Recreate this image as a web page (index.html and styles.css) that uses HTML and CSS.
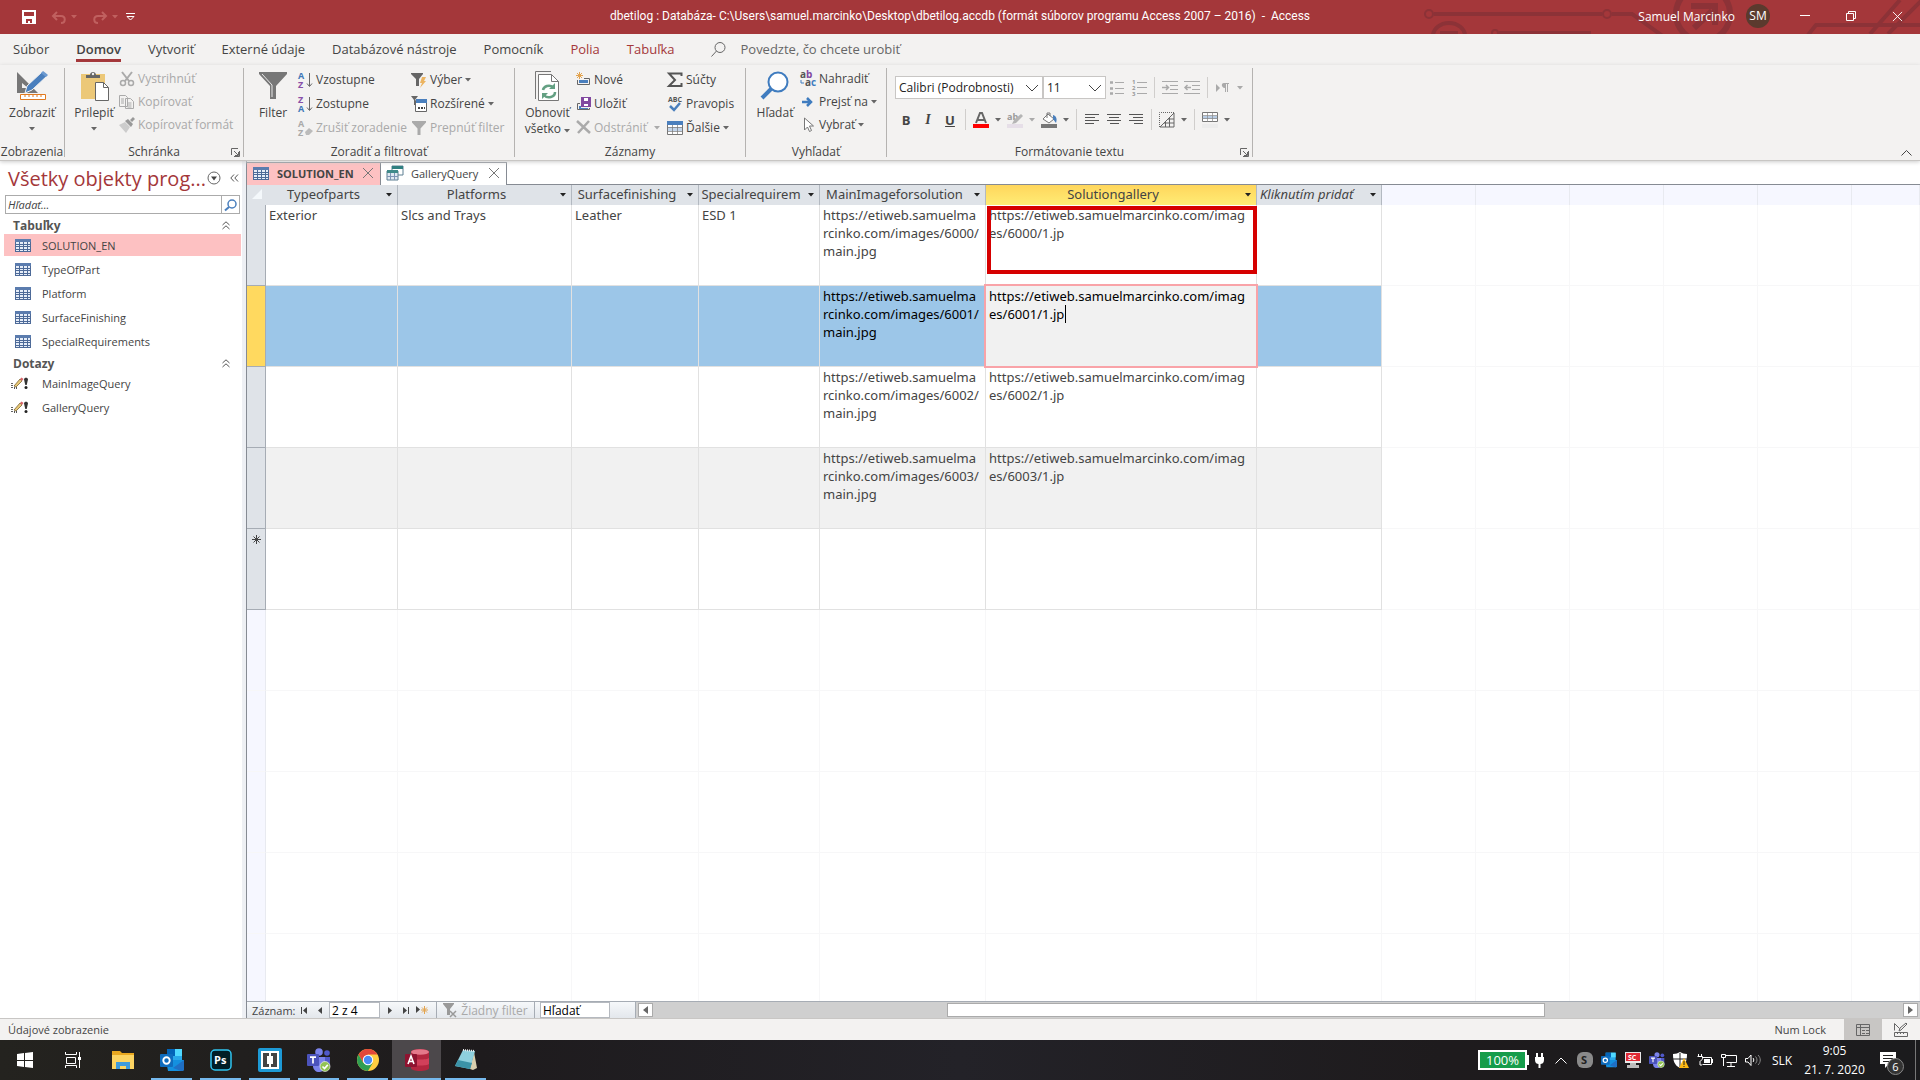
FILE: index.html
```html
<!DOCTYPE html>
<html lang="sk">
<head>
    <meta charset="UTF-8">
    <meta name="viewport" content="width=device-width, initial-scale=1.0">
    <title>dbetilog - Access</title>
    <link rel="stylesheet" href="styles.css">
</head>
<body>
    <!-- shared icons -->
    <svg class="sprites" aria-hidden="true">
        <symbol id="caret" viewBox="0 0 6 4"><path d="M0 0h6L3 3.5z"/></symbol>
        <symbol id="close" viewBox="0 0 12 12"><path d="M1 1l10 10M11 1L1 11" fill="none" stroke="currentColor"/></symbol>
        <symbol id="table" viewBox="0 0 16 13">
            <rect width="16" height="13" fill="#4d6a98"/>
            <rect width="16" height="3" fill="#5b7cae"/>
            <path d="M1 3h3v2H1zM5 3h3v2H5zM9 3h3v2H9zM13 3h2v2h-2zM1 6h3v1H1zM5 6h3v1H5zM9 6h3v1H9zM13 6h2v1h-2zM1 8h3v2H1zM5 8h3v2H5zM9 8h3v2H9zM13 8h2v2h-2zM1 11h3v1H1zM5 11h3v1H5zM9 11h3v1H9zM13 11h2v1h-2z" fill="#e6edf8"/>
        </symbol>
        <symbol id="query" viewBox="0 0 18 14">
            <path d="M1 7v1M1 9v1M1 11v1M3 12h1M5 12h1" stroke="#222" stroke-width="1.4"/>
            <path d="M3 10l6-7 2 2-6 6z" fill="#e8c878" stroke="#6b5320" stroke-width=".7"/>
            <path d="M9 3l1.500-1.500 2 1.500-1.500 2z" fill="#d9646a"/>
            <path d="M13 3.500C13 1 17 1 17 3.500L15.700 9h-1.400z" fill="#333"/>
            <circle cx="15" cy="11.500" r="1.500" fill="#222"/>
        </symbol>
        <symbol id="launch" viewBox="0 0 9 9"><path d="M.5 7V.5H7M3 3l4 4M8.500 3v5.500H3M7.500 4v3.500H4" fill="none" stroke="#666"/></symbol>
        <symbol id="funnel" viewBox="0 0 28 28"><path d="M0 0h28v3L17 15v13h-6V15L0 3z"/></symbol>
        <symbol id="outlook" viewBox="0 0 24 22">
            <rect x="7" width="15" height="13" fill="#28a8ea"/><rect x="7" width="8" height="7" fill="#0364b8"/><rect x="15" width="7" height="7" fill="#50d9ff"/>
            <path d="M6 11h18v9a2 2 0 0 1-2 2H8z" fill="#1490df"/><path d="M24 11L13 19l8 3h1a2 2 0 0 0 2-2z" fill="#1f6fc4"/>
            <rect y="5" width="13" height="13" rx="1" fill="#0f6cbd"/>
            <circle cx="6.500" cy="11.500" r="3.200" fill="none" stroke="#fff" stroke-width="1.900"/>
        </symbol>
        <symbol id="teams" viewBox="0 0 24 24">
            <circle cx="12" cy="4" r="3.800" fill="#7b83eb"/><circle cx="20" cy="5" r="2.800" fill="#5059c9"/>
            <path d="M15 9h8v7a4 4 0 0 1-8 2z" fill="#5059c9"/><path d="M6 9h12v8a6 6 0 0 1-12 2z" fill="#7b83eb"/>
            <rect y="6" width="12" height="12" rx="1" fill="#4b53bc"/><path d="M3 9.200h6M6 9v6.500" stroke="#fff" stroke-width="1.700"/>
            <circle cx="18" cy="18.500" r="5" fill="#92c353" stroke="#fff" stroke-width=".6"/><path d="M15.500 18.500l2 2 3.300-3.600" fill="none" stroke="#fff" stroke-width="1.600"/>
        </symbol>
    </svg>

    <div class="app">
        <header class="titlebar">
            <svg class="circuit" width="520" height="34" fill="none" stroke="#8c3237" stroke-width="4">
                <circle cx="29" cy="14" r="4" stroke-width="2"/><path d="M34 14h168M212 14h20l32 23"/><circle cx="207" cy="14" r="4" stroke-width="2"/>
                <path d="M33 36a16 13 0 0 1 32 0M40 33h18M99 33h92"/><circle cx="95" cy="33" r="3" stroke-width="2"/>
                <circle cx="303" cy="14" r="27" stroke-width="6"/><path d="M291 6h24M315 3v22M294 28l18-17" stroke-width="6"/>
                <path d="M408 35l8-10h104M470 34l30-34M488 34l34-34"/>
            </svg>
            <div class="quick">
                <button aria-label="Uložiť"><svg width="14" height="14"><path d="M0 0h14v14H0z" fill="#fff"/><path d="M2 2h10v4H2zM4 9h6v4H8v-2H6v2H4z" fill="#a4373a"/></svg></button>
                <button class="dim" aria-label="Späť"><svg width="14" height="13" fill="none" stroke="currentColor" stroke-width="2"><path d="M5 1L1 5l4 4M1.500 5H9c5 0 5 7 0 7"/></svg><svg class="caret"><use href="#caret"/></svg></button>
                <button class="dim" aria-label="Znova"><svg width="14" height="13" fill="none" stroke="currentColor" stroke-width="2"><path d="M9 1l4 4-4 4M12.500 5H5c-5 0-5 7 0 7"/></svg><svg class="caret"><use href="#caret"/></svg></button>
                <button class="more" aria-label="Prispôsobiť"><svg width="9" height="8" fill="none" stroke="#fff"><path d="M0 .5h9M1 3.500l3.500 3.500L8 3.500z"/></svg></button>
            </div>
            <h1 class="title">dbetilog : Databáza- C:\Users\samuel.marcinko\Desktop\dbetilog.accdb (formát súborov programu Access 2007 – 2016) &nbsp;- &nbsp;Access</h1>
            <div class="user">
                <span>Samuel Marcinko</span>
                <span class="avatar">SM</span>
                <button aria-label="Minimalizovať"><svg width="10" height="10" stroke="#fff"><path d="M0 4.500h10"/></svg></button>
                <button aria-label="Obnoviť okno"><svg width="10" height="10" fill="none" stroke="#fff"><path d="M.5 2.500h7v7h-7zM2.500 2V.5h7v7H8"/></svg></button>
                <button aria-label="Zavrieť"><svg width="11" height="11" color="#fff"><use href="#close"/></svg></button>
            </div>
        </header>

        <nav class="tabs">
            <a href="#">Súbor</a>
            <a href="#" class="active">Domov</a>
            <a href="#">Vytvoriť</a>
            <a href="#">Externé údaje</a>
            <a href="#">Databázové nástroje</a>
            <a href="#">Pomocník</a>
            <a href="#" class="context">Polia</a>
            <a href="#" class="context">Tabuľka</a>
            <label class="tell">
                <svg width="15" height="15" fill="none" stroke="#666"><circle cx="9" cy="5.500" r="5"/><path d="M5.500 9L.5 14.500"/></svg>
                <input type="text" placeholder="Povedzte, čo chcete urobiť">
            </label>
        </nav>

        <section class="ribbon">
            <div class="group g-view">
                <div class="tools">
                    <button class="big">
                        <svg width="31" height="30"><path d="M0 1l21 21H0zM5 12v5h6z" fill="#777" fill-rule="evenodd"/><path d="M8 22l2-7L26 0l5 4-16 15z" fill="#4a7fbd" stroke="#f3f2f1"/><path d="M26 0l5 4-2 2-5-4z" fill="#6c9ad0"/><path d="M3.500 23.500h25v5h-25zM8 24v2M12 24v2M16 24v2M20 24v2M24 24v2" fill="#fff" stroke="#e07a20"/></svg>
                        <span>Zobraziť</span><svg class="caret"><use href="#caret"/></svg>
                    </button>
                </div>
                <h2>Zobrazenia</h2>
            </div>

            <div class="group g-clip">
                <div class="tools">
                    <button class="big">
                        <svg width="29" height="30"><path d="M1 3h24v25H1z" fill="#ecc878"/><path d="M6 7V4h4c0-4 6-4 6 0h4v3z" fill="#666"/><circle cx="13" cy="3" r="1.200" fill="#f3f2f1"/><path d="M15.500 11.500h8l5 5v13h-13z" fill="#fff" stroke="#666"/><path d="M23.500 11.500v5h5" fill="none" stroke="#666"/></svg>
                        <span>Prilepiť</span><svg class="caret"><use href="#caret"/></svg>
                    </button>
                    <div class="stack tight">
                        <button disabled><svg width="16" height="16" fill="none" stroke="#aaa" stroke-width="2"><path d="M3 1l7 9M13 1L6 10"/><circle cx="4" cy="12" r="2.500" stroke-width="1.500"/><circle cx="12" cy="12" r="2.500" stroke-width="1.500"/></svg>Vystrihnúť</button>
                        <button disabled><svg width="16" height="16" fill="#f3f2f1" stroke="#aaa"><path d="M.5 1.500h6l2 2v9h-8zM6.500 4.500h5l3 3v7h-8z"/><path d="M2 5h3M2 7h3M2 9h3M8.500 9h4M8.500 11h4M8.500 13h4"/></svg>Kopírovať</button>
                        <button disabled><svg width="16" height="16"><path d="M0 8l6-3 5 5-4 6z" fill="#ccc"/><path d="M6 4l3-2 5 5-2 3zM11 3l3-3 2 2-3 3z" fill="#999"/></svg>Kopírovať formát</button>
                    </div>
                </div>
                <h2>Schránka</h2>
                <button class="launch" aria-label="Nastavenie schránky"><svg width="9" height="9"><use href="#launch"/></svg></button>
            </div>

            <div class="group g-sort">
                <div class="tools">
                    <button class="big">
                        <svg width="28" height="30"><path d="M0 1h28v2L17 15v13h-6V15L0 3z" fill="#777"/><path d="M3 3l10 11v12" fill="none" stroke="#e8e8e8"/></svg>
                        <span>Filter</span>
                    </button>
                    <div class="stack sort">
                        <button><svg width="15" height="18"><text x="0" y="8" fill="#3f78b8">A</text><text x="0" y="17" fill="#8750a8">Z</text><path d="M11.500 2v13M9 12.500l2.500 3 2.500-3" fill="none" stroke="#666"/></svg>Vzostupne</button>
                        <button><svg width="15" height="18"><text x="0" y="8" fill="#8750a8">Z</text><text x="0" y="17" fill="#3f78b8">A</text><path d="M11.500 2v13M9 12.500l2.500 3 2.500-3" fill="none" stroke="#666"/></svg>Zostupne</button>
                        <button disabled><svg width="15" height="18"><text x="0" y="8" fill="#aaa">A</text><text x="0" y="17" fill="#aaa">Z</text><path d="M7 13l4-4 4 3-4 4H8z" fill="#bbb"/></svg>Zrušiť zoradenie</button>
                    </div>
                    <div class="stack">
                        <button><svg width="16" height="16"><path d="M0 1h12v1L8 7v7H5V7L0 2z" fill="#666"/><path d="M11 5h4l-2 4h2l-6 7 2-5H9z" fill="#ecb460"/></svg>Výber<svg class="caret"><use href="#caret"/></svg></button>
                        <button><svg width="16" height="16"><path d="M0 0h7L4 4v5H3V4z" fill="#666"/><path d="M4.500 4.500h11v11h-11z" fill="#fff" stroke="#666"/><path d="M5 3h11v4H5z" fill="#4a7fbd"/><path d="M7 12h2M10 12h2M13 12h1" stroke="#444" stroke-width="2"/></svg>Rozšírené<svg class="caret"><use href="#caret"/></svg></button>
                        <button disabled><svg width="16" height="14" fill="#aaa"><use href="#funnel"/></svg>Prepnúť filter</button>
                    </div>
                </div>
                <h2>Zoradiť a filtrovať</h2>
            </div>

            <div class="group g-records">
                <div class="tools">
                    <button class="big">
                        <svg width="25" height="30"><path d="M.5 28V.5H16" fill="none" stroke="#777"/><path d="M3.500 3.500h13l7 7v19h-20z" fill="#fff" stroke="#777"/><path d="M16.500 3.500v7h7" fill="none" stroke="#777"/><path d="M8 19a6 5 0 0 1 10-3M20 21a6 5 0 0 1-11 3" fill="none" stroke="#64a083" stroke-width="2.500"/><path d="M20 12v6h-6zM7 28v-6h6z" fill="#64a083"/></svg>
                        <span>Obnoviť<br>všetko <svg class="caret"><use href="#caret"/></svg></span>
                    </button>
                    <div class="stack">
                        <button><svg width="15" height="16"><path d="M3.500 0v7M0 3.500h7M1 1l5 5M6 1L1 6" stroke="#e3a44f"/><path d="M8 6.500h5.500v6h-12V8" fill="none" stroke="#666"/><path d="M3 8h9v3H3z" fill="#4a7fbd"/></svg>Nové</button>
                        <button><svg width="15" height="16"><path d="M5 1h10v10H5z" fill="#8148a0"/><path d="M8 2h4v3H8zM8 8h4v2H8z" fill="#fff"/><path d="M4 7.500H1.500v6h12V12" fill="none" stroke="#666"/><path d="M3 10h2v2h7v1H3z" fill="#4a7fbd"/></svg>Uložiť</button>
                        <button disabled><svg width="15" height="15"><path d="M1 1l13 12M13 1L2 13" stroke="#aaa" stroke-width="2.500"/></svg>Odstrániť<svg class="caret far"><use href="#caret"/></svg></button>
                    </div>
                    <div class="stack">
                        <button><svg width="16" height="16"><path d="M14.500 4V1.500H2L8 8l-6 6h12.500V11" fill="none" stroke="#555" stroke-width="2"/></svg>Súčty</button>
                        <button class="spell"><svg width="16" height="16"><text x="1" y="6" fill="#555">ABC</text><path d="M3 10l4 4 6-7" fill="none" stroke="#4a7fbd" stroke-width="2.500"/></svg>Pravopis</button>
                        <button><svg width="16" height="16"><path d="M.5 1.500h15v13H.5z" fill="#fff" stroke="#777"/><path d="M0 1h16v4H0z" fill="#4a7fbd"/><path d="M1 7h14v4H1z" fill="#c3d5ea"/><path d="M0 7.500h16M0 11.500h16M5.500 5v10M10.500 5v10" stroke="#777" stroke-width=".7"/></svg>Ďalšie<svg class="caret"><use href="#caret"/></svg></button>
                    </div>
                </div>
                <h2>Záznamy</h2>
            </div>

            <div class="group g-find">
                <div class="tools">
                    <button class="big">
                        <svg width="28" height="30" fill="#fff" stroke="#3f7cbf"><path d="M1 27l10-10" stroke-width="4"/><circle cx="17" cy="11" r="9.500" stroke-width="2"/></svg>
                        <span>Hľadať</span>
                    </button>
                    <div class="stack tight replace">
                        <button><svg width="16" height="16"><text x="0" y="7" fill="#555">a</text><text x="6" y="7" fill="#8148a0">b</text><text x="5" y="15" fill="#555">a</text><text x="11" y="15" fill="#3f7cbf">c</text><path d="M1 9v3h3" fill="none" stroke="#3f7cbf"/></svg>Nahradiť</button>
                        <button><svg width="16" height="12"><path d="M2 6h9M7 2l4 4-4 4" fill="none" stroke="#3f7cbf" stroke-width="2.500"/></svg>Prejsť na<svg class="caret"><use href="#caret"/></svg></button>
                        <button><svg width="16" height="16"><path d="M4.500 1v12l3-3 2 4.500 2-1L9.500 9h4z" fill="#fff" stroke="#777"/></svg>Vybrať<svg class="caret"><use href="#caret"/></svg></button>
                    </div>
                </div>
                <h2>Vyhľadať</h2>
            </div>

            <div class="group g-format">
                <div class="format">
                    <div class="row">
                        <select class="font" aria-label="Písmo"><option>Calibri (Podrobnosti)</option></select>
                        <select class="size" aria-label="Veľkosť písma"><option>11</option></select>
                        <button disabled aria-label="Odrážky"><svg width="14" height="15" stroke="#aaa"><path d="M5 2.500h9M5 8.500h9M5 13.500h9"/><path d="M0 2.500h3M0 8.500h3M0 13.500h3" stroke-width="2.500"/></svg></button>
                        <button disabled aria-label="Číslovanie" class="num"><svg width="15" height="17"><text x="0" y="5" fill="#999">1</text><text x="0" y="11" fill="#999">2</text><text x="0" y="17" fill="#999">3</text><path d="M5 3.500h10M5 8.500h10M5 14.500h10" stroke="#aaa"/></svg></button>
                        <i class="sep"></i>
                        <button disabled aria-label="Zväčšiť zarážku"><svg width="16" height="14" fill="none" stroke="#aaa"><path d="M0 .5h16M8 4.500h8M8 8.500h8M0 12.500h16"/><path d="M0 6.500h6M4 4l2.500 2.500L4 9" stroke-width="1.500"/></svg></button>
                        <button disabled aria-label="Zmenšiť zarážku"><svg width="16" height="14" fill="none" stroke="#aaa"><path d="M0 .5h16M8 4.500h8M8 8.500h8M0 12.500h16"/><path d="M1 6.500h6M3.500 4L1 6.500 3.500 9" stroke-width="1.500"/></svg></button>
                        <i class="sep"></i>
                        <button disabled class="split" aria-label="Smer textu"><svg width="16" height="12" fill="#aaa"><path d="M1 2l4 4-4 4zM7 2a2.500 2.500 0 0 1 2.500-1H14v1h-1v8h-1V2h-1v8h-1V6a3 3 0 0 1-3-4z"/></svg><svg class="caret"><use href="#caret"/></svg></button>
                    </div>
                    <div class="row">
                        <button><b>B</b></button>
                        <button><em>I</em></button>
                        <button><u>U</u></button>
                        <i class="sep"></i>
                        <button class="split" aria-label="Farba písma"><svg width="16" height="16"><path d="M3 11l4-10h2l4 10M5 8h6" fill="none" stroke="#666" stroke-width="2"/><path d="M0 12h16v4H0z" fill="#f00"/></svg><svg class="caret"><use href="#caret"/></svg></button>
                        <button class="split hl" disabled aria-label="Zvýraznenie"><svg width="16" height="16"><text x="0" y="8" fill="#999">ab</text><path d="M5 12l2-4 7-6 2 2-7 7z" fill="#b5b5b5"/><path d="M0 12h16v4H0z" fill="#e6dfe8"/></svg><svg class="caret"><use href="#caret"/></svg></button>
                        <button class="split" aria-label="Farba pozadia"><svg width="16" height="16"><path d="M2 7l5-5 6 5-5 4zM6 6V1h3v3" fill="#fff" stroke="#777"/><path d="M12 3c4 1 4 5 3 8l-3-4z" fill="#4a7fbd"/><path d="M0 12h16v4H0z" fill="#777"/></svg><svg class="caret"><use href="#caret"/></svg></button>
                        <i class="sep"></i>
                        <button aria-label="Vľavo"><svg width="15" height="11" stroke="#555"><path d="M0 .5h14M0 3.500h10M0 6.500h14M0 9.500h9"/></svg></button>
                        <button aria-label="Na stred"><svg width="15" height="11" stroke="#555"><path d="M0 .5h14M2 3.500h10M0 6.500h14M3 9.500h9"/></svg></button>
                        <button aria-label="Vpravo"><svg width="15" height="11" stroke="#555"><path d="M0 .5h14M4 3.500h10M0 6.500h14M5 9.500h9"/></svg></button>
                        <i class="sep"></i>
                        <button class="split" aria-label="Mriežka"><svg width="16" height="16" fill="none" stroke="#666"><path d="M.5 15V.5H15" stroke-dasharray="1 1"/><path d="M1 15L15 1v14zM5 11h10M9 7h6M10.500 6v9M6.500 10v5"/></svg><svg class="caret"><use href="#caret"/></svg></button>
                        <i class="sep"></i>
                        <button class="split" aria-label="Farba riadkov"><svg width="16" height="16"><path d="M.5 .5h15v9H.5z" fill="#fff" stroke="#777"/><path d="M1 4h14v3H1z" fill="#b8cce4"/><path d="M5.500 1v9M10.500 1v9M0 3.500h16M0 6.500h16" stroke="#888" stroke-width=".7"/><path d="M0 12h16v4H0z" fill="#ececec"/></svg><svg class="caret"><use href="#caret"/></svg></button>
                    </div>
                </div>
                <h2>Formátovanie textu</h2>
                <button class="launch" aria-label="Nastavenie textu"><svg width="9" height="9"><use href="#launch"/></svg></button>
            </div>
            <button class="collapse" aria-label="Zbaliť pás"><svg width="11" height="6" fill="none" stroke="#444"><path d="M.5 5.500l5-5 5 5"/></svg></button>
        </section>

        <main class="workspace">
            <aside class="pane">
                <div class="pane-title">
                    <h2>Všetky objekty prog...</h2>
                    <button aria-label="Ponuka"><svg width="14" height="14"><circle cx="7" cy="7" r="6" fill="#fff" stroke="#666"/><path d="M4 5.500h6l-3 4z" fill="#444"/></svg></button>
                    <button aria-label="Skryť"><svg width="9" height="8" fill="none" stroke="#555"><path d="M4 .5L.8 4 4 7.500M8 .5L4.800 4 8 7.500"/></svg></button>
                </div>
                <div class="search">
                    <input type="text" placeholder="Hľadať..." aria-label="Hľadať objekty">
                    <button aria-label="Hľadať"><svg width="13" height="12" fill="none" stroke="#4a7fbd"><circle cx="8" cy="5" r="4" stroke-width="1.500"/><path d="M5 8l-4 3.500" stroke-width="2"/></svg></button>
                </div>
                <button class="section">Tabuľky <svg width="8" height="9" fill="none" stroke="#555"><path d="M.5 4L4 .8 7.500 4M.5 8L4 4.800 7.500 8"/></svg></button>
                <ul>
                    <li class="selected"><a href="#"><svg width="16" height="13"><use href="#table"/></svg>SOLUTION_EN</a></li>
                    <li><a href="#"><svg width="16" height="13"><use href="#table"/></svg>TypeOfPart</a></li>
                    <li><a href="#"><svg width="16" height="13"><use href="#table"/></svg>Platform</a></li>
                    <li><a href="#"><svg width="16" height="13"><use href="#table"/></svg>SurfaceFinishing</a></li>
                    <li><a href="#"><svg width="16" height="13"><use href="#table"/></svg>SpecialRequirements</a></li>
                </ul>
                <button class="section">Dotazy <svg width="8" height="9" fill="none" stroke="#555"><path d="M.5 4L4 .8 7.500 4M.5 8L4 4.800 7.500 8"/></svg></button>
                <ul class="queries">
                    <li><a href="#"><svg width="18" height="14"><use href="#query"/></svg>MainImageQuery</a></li>
                    <li><a href="#"><svg width="18" height="14"><use href="#query"/></svg>GalleryQuery</a></li>
                </ul>
            </aside>

            <div class="document">
                <div class="doc-tabs">
                    <div class="doc-tab current"><svg width="16" height="13"><use href="#table"/></svg><span>SOLUTION_EN</span><button aria-label="Zavrieť kartu"><svg width="12" height="12"><use href="#close"/></svg></button></div>
                    <div class="doc-tab"><svg width="16" height="15"><path d="M5 0h11v9H5z" fill="#fff" stroke="#5d7f92"/><path d="M5 0h11v3H5z" fill="#2f7f80"/><path d="M0 5h11v9H0z" fill="#dfe8f2" stroke="#5d7f92"/><path d="M0 4h11v3H0z" fill="#3f8a8a"/><path d="M3.500 7v7M7.500 7v7M0 10.500h11" stroke="#7d95b5"/></svg><span>GalleryQuery</span><button aria-label="Zavrieť kartu"><svg width="12" height="12"><use href="#close"/></svg></button></div>
                </div>
                <div class="sheet">
                    <table>
                        <colgroup>
                            <col class="c-sel"><col class="c1"><col class="c2"><col class="c3"><col class="c4"><col class="c5"><col class="c6"><col class="c7">
                            <col class="ce"><col class="ce"><col class="ce"><col class="ce"><col class="ce"><col>
                        </colgroup>
                        <thead>
                            <tr>
                                <th><svg width="12" height="12"><path d="M11 1v10H1z" fill="#f4f8fb"/></svg></th>
                                <th><div>Typeofparts<svg class="caret"><use href="#caret"/></svg></div></th>
                                <th><div>Platforms<svg class="caret"><use href="#caret"/></svg></div></th>
                                <th><div>Surfacefinishing<svg class="caret"><use href="#caret"/></svg></div></th>
                                <th><div>Specialrequirem<svg class="caret"><use href="#caret"/></svg></div></th>
                                <th><div>MainImageforsolution<svg class="caret"><use href="#caret"/></svg></div></th>
                                <th class="hot"><div>Solutiongallery<svg class="caret"><use href="#caret"/></svg></div></th>
                                <th class="add"><div>Kliknutím pridať<svg class="caret"><use href="#caret"/></svg></div></th>
                                <th class="e"></th><th class="e"></th><th class="e"></th><th class="e"></th><th class="e"></th><th class="e"></th>
                            </tr>
                        </thead>
                        <tbody>
                            <tr>
                                <td></td><td>Exterior</td><td>Slcs and Trays</td><td>Leather</td><td>ESD 1</td>
                                <td>https://etiweb.samuelma<br>rcinko.com/images/6000/<br>main.jpg</td>
                                <td class="marked">https://etiweb.samuelmarcinko.com/imag<br>es/6000/1.jp</td>
                                <td></td><td></td><td></td><td></td><td></td><td></td><td></td>
                            </tr>
                            <tr class="current">
                                <td></td><td></td><td></td><td></td><td></td>
                                <td>https://etiweb.samuelma<br>rcinko.com/images/6001/<br>main.jpg</td>
                                <td class="editing"><textarea aria-label="Solutiongallery" spellcheck="false">https://etiweb.samuelmarcinko.com/imag
es/6001/1.jp</textarea><i class="cursor"></i></td>
                                <td></td><td></td><td></td><td></td><td></td><td></td><td></td>
                            </tr>
                            <tr>
                                <td></td><td></td><td></td><td></td><td></td>
                                <td>https://etiweb.samuelma<br>rcinko.com/images/6002/<br>main.jpg</td>
                                <td>https://etiweb.samuelmarcinko.com/imag<br>es/6002/1.jp</td>
                                <td></td><td></td><td></td><td></td><td></td><td></td><td></td>
                            </tr>
                            <tr class="alt">
                                <td></td><td></td><td></td><td></td><td></td>
                                <td>https://etiweb.samuelma<br>rcinko.com/images/6003/<br>main.jpg</td>
                                <td>https://etiweb.samuelmarcinko.com/imag<br>es/6003/1.jp</td>
                                <td></td><td></td><td></td><td></td><td></td><td></td><td></td>
                            </tr>
                            <tr>
                                <td class="new"><svg width="9" height="9" stroke="#444"><path d="M4.500 0v9M0 4.500h9M1.500 1.500l6 6M7.500 1.500l-6 6"/></svg></td>
                                <td></td><td></td><td></td><td></td><td></td><td></td><td></td><td></td><td></td><td></td><td></td><td></td><td></td>
                            </tr>
                        </tbody>
                        <tbody class="empty">
                            <tr><td></td><td></td><td></td><td></td><td></td><td></td><td></td><td></td><td></td><td></td><td></td><td></td><td></td><td></td></tr>
                            <tr><td></td><td></td><td></td><td></td><td></td><td></td><td></td><td></td><td></td><td></td><td></td><td></td><td></td><td></td></tr>
                            <tr><td></td><td></td><td></td><td></td><td></td><td></td><td></td><td></td><td></td><td></td><td></td><td></td><td></td><td></td></tr>
                            <tr><td></td><td></td><td></td><td></td><td></td><td></td><td></td><td></td><td></td><td></td><td></td><td></td><td></td><td></td></tr>
                            <tr><td></td><td></td><td></td><td></td><td></td><td></td><td></td><td></td><td></td><td></td><td></td><td></td><td></td><td></td></tr>
                        </tbody>
                    </table>
                </div>
                <div class="recordbar">
                    <label for="record">Záznam:</label>
                    <button aria-label="Prvý"><svg width="7" height="7" fill="#444"><path d="M0 0h1v7H0zM6 0v7L2 3.500z"/></svg></button>
                    <button aria-label="Predchádzajúci"><svg width="4" height="7" fill="#444"><path d="M4 0v7L0 3.500z"/></svg></button>
                    <input id="record" type="text" value="2 z 4">
                    <button aria-label="Ďalší"><svg width="4" height="7" fill="#444"><path d="M0 0v7l4-3.500z"/></svg></button>
                    <button aria-label="Posledný"><svg width="6" height="7" fill="#444"><path d="M5 0h1v7H5zM0 0v7l4-3.500z"/></svg></button>
                    <button aria-label="Nový"><svg width="12" height="8"><path d="M0 0v7l4-3.500z" fill="#444"/><path d="M8.500 0v8M5 4h7M6 1.500l5 5M11 1.500l-5 5" stroke="#e3a44f"/></svg></button>
                    <button class="nofilter" disabled><svg width="14" height="15"><path d="M0 0h11v1L7 6v6H4V6L0 1z" fill="#999"/><path d="M7 8l6 6M13 8l-6 6" stroke="#999" stroke-width="1.500"/></svg>Žiadny filter</button>
                    <input class="find" type="text" value="Hľadať" aria-label="Hľadať v záznamoch">
                    <div class="scroll">
                        <button aria-label="Posunúť vľavo"><svg width="5" height="8" fill="#666"><path d="M5 0v8L0 4z"/></svg></button>
                        <div class="track"><div class="thumb"></div></div>
                        <button aria-label="Posunúť vpravo"><svg width="5" height="8" fill="#666"><path d="M0 0v8l5-4z"/></svg></button>
                    </div>
                </div>
            </div>
        </main>

        <footer class="status">
            <span>Údajové zobrazenie</span>
            <span class="numlock">Num Lock</span>
            <button class="on" aria-label="Údajové zobrazenie"><svg width="14" height="14" fill="none" stroke="#666"><path d="M.5 1.500h13v11H.5zM0 4.500h14M4.500 2v11M6 7.500h3M10 7.500h3M6 10.500h3M10 10.500h3"/></svg></button>
            <button aria-label="Návrhové zobrazenie"><svg width="14" height="14" fill="none" stroke="#666"><path d="M.5 9.500h13v4H.5zM3.500 10v1M6.500 10v1M9.500 10v1M.5 7.500v-7l5 5M5 8l1-3 6-5 1 1-6 6z"/></svg></button>
        </footer>

        <div class="taskbar">
            <div class="apps">
                <button aria-label="Štart"><svg width="16" height="16" fill="#fff"><path d="M0 2l7-1v7H0zM8 1l8-1v8H8zM0 9h7v6l-7-1zM8 9h8v7l-8-1z"/></svg></button>
                <button aria-label="Zobrazenie úloh"><svg width="17" height="16" fill="none" stroke="#fff"><path d="M.5 0v2.500h11V0M1.500 5.500h9v6h-9zM.5 16v-2.500h11V16M14.500 0v16"/><path d="M13 5h3v3h-3z" fill="#fff" stroke="none"/></svg></button>
                <button aria-label="Prieskumník"><svg width="22" height="20"><path d="M0 1h8l2 2h12v16H0z" fill="#e9a820"/><path d="M0 5h22v14H0z" fill="#fcd462"/><path d="M4 19v-7h14v7h-4v-3H8v3z" fill="#3e9bdc"/></svg></button>
                <button class="open" aria-label="Outlook"><svg width="24" height="22"><use href="#outlook"/></svg></button>
                <button class="open" aria-label="Photoshop"><svg class="ps" width="22" height="22"><rect x="1" y="1" width="20" height="20" rx="4" fill="#001e26" stroke="#31c5f0" stroke-width="1.500"/><text x="4" y="15" fill="#fff">Ps</text></svg></button>
                <button class="open" aria-label="Brackets"><svg width="24" height="24"><rect width="24" height="24" rx="2" fill="#1d9ad6"/><rect x="3" y="3" width="18" height="18" fill="#fff"/><path d="M5 5h6v3H9v8h2v3H5zM19 5h-6v3h2v8h-2v3h6z" fill="#444"/></svg></button>
                <button class="open" aria-label="Teams"><svg width="24" height="24"><use href="#teams"/></svg></button>
                <button class="open" aria-label="Chrome"><svg width="22" height="22"><circle cx="11" cy="11" r="11" fill="#ffcd40"/><path d="M1.500 5.500A11 11 0 0 1 20.500 5.500H11L6.200 13.800z" fill="#e2473a"/><path d="M1.500 5.500A11 11 0 0 0 11 22l4.800-8.300L11 16l-4.800-2.200z" fill="#2f9e52"/><circle cx="11" cy="11" r="5.200" fill="#fff"/><circle cx="11" cy="11" r="4.200" fill="#4a8af4"/></svg></button>
                <button class="open active" aria-label="Access"><svg width="24" height="22"><path d="M6 3c0-4 18-4 18 0v16c0 4-18 4-18 0z" fill="#b3263f"/><path d="M6 9c2 2 16 2 18 0v6c-2 2-16 2-18 0z" fill="#d2405a"/><ellipse cx="15" cy="3" rx="9" ry="2.800" fill="#e4788a"/><rect y="5" width="12" height="13" rx="1" fill="#8f1330"/><path d="M3 15l3-8 3 8M4 12.500h4" fill="none" stroke="#fff" stroke-width="1.600"/></svg></button>
                <button class="open" aria-label="Poznámkový blok"><svg width="24" height="22"><path d="M20 3l3 16-4 2-3-1z" fill="#d9cfae"/><path d="M9 1l12 1-5 18-15-3z" fill="#8ed0de"/><path d="M4 11l14 3-2 6-15-3z" fill="#3b93a8"/><path d="M9 1l12 1" stroke="#eee" stroke-width="2" stroke-dasharray="1 1"/></svg></button>
            </div>
            <div class="tray">
                <span class="battery">100%</span>
                <span class="plug"><svg width="9" height="15" fill="#fff"><path d="M1 0h2v4H1zM6 0h2v4H6zM0 4h9v3c0 3-2 4-3.500 4v4h-2v-4C2 11 0 10 0 7z"/></svg></span>
                <button aria-label="Skryté ikony"><svg width="12" height="7" fill="none" stroke="#fff"><path d="M.5 6.500L6 1l5.500 5.500"/></svg></button>
                <button aria-label="Skype"><svg class="skype" width="16" height="16"><rect width="16" height="16" rx="6" fill="#8a8a8a"/><text x="4" y="12" fill="#222">S</text></svg></button>
                <button aria-label="Outlook"><svg width="16" height="16"><use href="#outlook"/></svg></button>
                <button aria-label="SC"><svg class="sc" width="16" height="16"><path d="M0 0h16v11H0z" fill="#e8e8e8"/><path d="M1 1h14v8H1z" fill="#e02a35"/><text x="3" y="8" fill="#fff">SC</text><path d="M5 11h6v2h3v3H2v-3h3z" fill="#bbb"/></svg></button>
                <button aria-label="Teams"><svg width="16" height="16"><use href="#teams"/></svg></button>
                <button aria-label="Zabezpečenie"><svg width="16" height="16"><path d="M7 0c2 1 4 2 7 2 0 6-1 11-7 14C1 13 0 8 0 2c3 0 5-1 7-2z" fill="#fff"/><path d="M7 1v14M0 7h14" stroke="#222"/><path d="M11 6l5 10H6z" fill="#fdb813"/><path d="M11 9v4M11 14v1" stroke="#222"/></svg></button>
                <button aria-label="Batéria"><svg width="16" height="12" fill="none" stroke="#fff"><path d="M5 3.500h9.500v7h-9M15.500 5v4M1.500 0v2M4.500 0v2M.5 2.500h5v2c0 2-2.500 2-2.500 3v3.500h2"/><path d="M7 5h6v4H7z" fill="#fff" stroke="none"/></svg></button>
                <button aria-label="Sieť"><svg width="16" height="14" fill="none" stroke="#fff"><path d="M5 2.500h10.500v7H5.500M10 10v3.500M6 13.500h8M.5 1.500h4v3h-4zM2.500 5v8"/></svg></button>
                <button aria-label="Hlasitosť"><svg width="16" height="12" fill="none" stroke="#fff"><path d="M.5 4.500H3l3-3.500v10.500L3 8H.5zM8 4c1 1 1 3 0 4"/><path d="M10.500 2.500c2 2 2 5 0 7M13 1c3 3 3 7 0 10" stroke="#888"/></svg></button>
                <span class="lang">SLK</span>
                <time class="clock">9:05<br>21. 7. 2020</time>
                <button class="notes" aria-label="Oznámenia"><svg width="16" height="16"><path d="M0 0h16v12H9l-4 4v-4H0z" fill="#fff"/><path d="M3 3.500h10M3 6.500h10M3 9.500h6" stroke="#222"/></svg><span class="badge">6</span></button>
            </div>
        </div>
    </div>
</body>
</html>
```

FILE: styles.css
```css
* {
    box-sizing: border-box;
}
body {
    margin: 0;
    font-family: "Open Sans", "Noto Sans", sans-serif;
    font-size: 12px;
    color: #444;
}
button, input, select, textarea {
    font: inherit;
    color: inherit;
}
button {
    display: flex;
    align-items: center;
    justify-content: center;
    padding: 0;
    border: none;
    background: none;
    white-space: nowrap;
}
button:disabled {
    color: #a9a9a9;
}
h1, h2, ul {
    margin: 0;
    padding: 0;
    font-size: inherit;
    font-weight: normal;
    list-style: none;
}
a {
    color: inherit;
    text-decoration: none;
}
svg {
    flex: none;
    overflow: visible;
}
.sprites {
    display: none;
}
.caret {
    width: 6px;
    height: 4px;
    fill: #666;
}
button:disabled .caret {
    fill: #aaa;
}
.app {
    display: flex;
    flex-direction: column;
    height: 100vh;
    overflow: hidden;
}

/* title bar */
.titlebar {
    position: relative;
    display: grid;
    grid-template-columns: 1fr auto 1fr;
    align-items: center;
    height: 34px;
    padding-bottom: 2px;
    background: #a4373a;
    color: #fff;
}
.circuit {
    position: absolute;
    top: 0;
    right: 0;
    overflow: hidden;
}
.quick {
    display: flex;
    gap: 16px;
    padding: 2px 0 0 22px;
}
.quick button {
    gap: 5px;
}
.quick .dim {
    color: #c0605f;
}
.quick .caret {
    fill: #c0605f;
}
.quick .more {
    margin-left: -8px;
}
.title {
    font-family: Roboto, "Open Sans", sans-serif;
    white-space: pre;
}
.user {
    position: relative;
    display: flex;
    align-items: center;
    justify-content: flex-end;
}
.avatar {
    width: 24px;
    margin: 0 12px 0 11px;
    border-radius: 50%;
    background: #5b3a2e;
    line-height: 24px;
    text-align: center;
}
.user button {
    width: 46px;
    height: 32px;
}

/* ribbon tabs */
.tabs {
    display: flex;
    height: 31px;
    padding-left: 13px;
    gap: 27px;
    background: #f3f2f1;
    font-size: 13px;
    line-height: 30px;
}
.tabs .active {
    height: 28px;
    border-bottom: 3px solid #a4373a;
    font-weight: 600;
}
.tabs .context {
    color: #a4373a;
}
.tell {
    display: flex;
    align-items: center;
    gap: 14px;
    height: 30px;
    padding-left: 10px;
}
.tell input {
    width: 200px;
    padding: 0;
    border: none;
    background: none;
}
.tell input::placeholder {
    color: #666;
    opacity: 1;
}

/* ribbon */
.ribbon {
    position: relative;
    z-index: 1;
    display: flex;
    height: 96px;
    padding: 3px 0;
    border-bottom: 1px solid #c8c6c4;
    background: #f3f2f1;
    box-shadow: 0 1px 4px #ccc;
}
.group {
    position: relative;
    display: flex;
    flex-direction: column;
    justify-content: space-between;
    border-right: 1px solid #b5b3b1;
}
.group h2 {
    line-height: 18px;
    margin-bottom: -4px;
    text-align: center;
}
.g-view { width: 65px; }
.g-clip { width: 179px; }
.g-sort { width: 271px; }
.g-records { width: 231px; }
.g-find { width: 141px; }
.g-format { width: 366px; }
.tools {
    display: flex;
}
.big {
    flex-direction: column;
    justify-content: flex-start;
    width: 54px;
    padding: 3px 0 0 4px;
}
.g-view .big {
    width: 64px;
    padding-left: 0;
}
.big span {
    line-height: 16px;
    margin-top: 4px;
}
.big > .caret {
    margin-top: 6px;
}
.stack button {
    justify-content: flex-start;
    gap: 3px;
    height: 24px;
    padding-bottom: 1px;
}
.stack.tight button {
    height: 23px;
    padding-bottom: 2px;
}
.g-sort .sort {
    width: 113px;
}
.g-records .big {
    width: 61px;
}
.g-records .stack:nth-child(2) {
    width: 91px;
}
.stack .far {
    margin-left: 4px;
    fill: #666;
}
.sort text, .hl text {
    font: bold 9px "Open Sans", sans-serif;
}
.spell text {
    font: bold 7px "Open Sans", sans-serif;
}
.replace text {
    font: bold 10px "Open Sans", sans-serif;
}
.num text {
    font: bold 6px "Open Sans", sans-serif;
}
.launch {
    position: absolute;
    right: 3px;
    bottom: 0;
}
.format {
    padding: 8px 0 0 8px;
}
.row {
    display: flex;
    align-items: center;
    height: 23px;
    margin-bottom: 9px;
}
.row:last-child {
    margin-bottom: 0;
}
.row button {
    width: 22px;
    height: 23px;
    color: #444;
    font-size: 13px;
}
.row .split {
    width: 34px;
    gap: 6px;
}
.row em {
    font-family: "Liberation Serif", serif;
    font-weight: bold;
    font-size: 14px;
}
.row u {
    font-weight: bold;
}
.sep {
    width: 1px;
    height: 21px;
    margin: 0 4px;
    background: #d0cecc;
}
select {
    appearance: none;
    height: 23px;
    padding: 0 3px;
    border: 1px solid #c8c6c4;
    border-radius: 0;
    background: #fff url("data:image/svg+xml,%3Csvg xmlns='http://www.w3.org/2000/svg' width='14' height='8' fill='none' stroke='%23444'%3E%3Cpath d='M1 1l6 6 6-6'/%3E%3C/svg%3E") no-repeat right 3px center;
    color: #222;
}
.font {
    width: 148px;
}
.size {
    width: 63px;
}
.collapse {
    position: absolute;
    right: 8px;
    bottom: 4px;
}

/* navigation pane */
.workspace {
    display: flex;
    flex: 1;
    min-height: 0;
}
.pane {
    width: 246px;
    border-right: 4px solid #eef0f4;
    background: #fff;
    font-size: 11px;
}
.pane-title {
    display: flex;
    align-items: center;
    gap: 9px;
    height: 34px;
    padding-left: 8px;
}
.pane-title h2 {
    width: 190px;
    color: #a4373a;
    font-size: 20px;
    white-space: nowrap;
}
.search {
    display: flex;
    height: 19px;
    margin: 0 2px 2px 5px;
    border: 1px solid #ababab;
}
.search input {
    flex: 1;
    min-width: 0;
    padding: 0 2px;
    border: none;
    font-style: italic;
}
.search input::placeholder {
    color: #444;
    opacity: 1;
}
.search button {
    width: 18px;
    border-left: 1px solid #ababab;
}
.section {
    justify-content: space-between;
    width: 100%;
    height: 18px;
    padding: 0 12px 0 13px;
    font-size: 12px;
    font-weight: bold;
    color: #555;
}
.pane li {
    height: 22px;
    margin: 0 1px 2px 4px;
}
.pane a {
    display: flex;
    align-items: center;
    gap: 11px;
    height: 22px;
    padding-left: 11px;
}
.pane .selected {
    background: #fdc1c2;
}
.queries a {
    gap: 13px;
    padding-left: 7px;
}

/* open documents */
.document {
    display: flex;
    flex: 1;
    flex-direction: column;
    min-width: 0;
    border-left: 1px solid #868b93;
}
.doc-tabs {
    display: flex;
    height: 24px;
    padding-top: 1px;
    font-size: 11px;
}
.doc-tabs::after {
    content: "";
    flex: 1;
    border-bottom: 1px solid #868b93;
}
.doc-tab {
    display: flex;
    align-items: center;
    width: 126px;
    padding: 0 6px 2px;
    gap: 8px;
    border-top: 1px solid #868b93;
    border-right: 1px solid #868b93;
}
.doc-tab.current {
    width: 134px;
    background: #fdc1c2;
    font-weight: bold;
}
.doc-tab button {
    margin-left: auto;
    color: #777;
}

/* datasheet */
.sheet {
    flex: 1;
    min-height: 0;
    overflow: hidden;
}
table {
    width: 100%;
    table-layout: fixed;
    border-spacing: 0;
    font-family: "Noto Sans", sans-serif;
    font-size: 13px;
    line-height: 18px;
}
.c-sel { width: 19px; }
.c1 { width: 132px; }
.c2 { width: 174px; }
.c3 { width: 127px; }
.c4 { width: 121px; }
.c5 { width: 166px; }
.c6 { width: 271px; }
.c7 { width: 125px; }
.ce { width: 94px; }
th {
    height: 20px;
    padding: 0 0 2px;
    border-right: 1px solid #b3b9c1;
    background: #dfe3e8;
    font-weight: normal;
}
th:first-child {
    border: none;
    line-height: 0;
}
th div {
    position: relative;
    padding-right: 16px;
    white-space: nowrap;
}
th .caret {
    position: absolute;
    top: 8px;
    right: 5px;
    fill: #222;
}
.hot {
    background: linear-gradient(#ffd65c, #ffec75);
}
.add {
    font-style: italic;
}
.add div {
    padding-left: 3px;
    text-align: left;
}
.e {
    border-color: #e8eaf0;
    background: #f6f7ff;
}
td {
    position: relative;
    height: 81px;
    padding: 1px 0 0 3px;
    border-right: 1px solid #e1e1e1;
    border-bottom: 1px solid #e1e1e1;
    vertical-align: top;
    white-space: nowrap;
}
td:first-child {
    border-color: #a6acb4;
    background: #dfe3e8;
}
td:nth-child(n + 9), .empty td {
    border-color: #f7f7f8;
}
.empty td:first-child {
    border-right-color: #e8eaf0;
    background: #f6f7ff;
}
.current td:nth-child(n + 2):nth-child(-n + 8) {
    background: #9cc6e8;
    color: #000;
}
.current td:first-child {
    background: #ffd95f;
}
.alt td:nth-child(n + 2):nth-child(-n + 8) {
    background: #f1f1f1;
}
.marked::after {
    content: "";
    position: absolute;
    inset: 1px -1px 11px 1px;
    border: 4px solid #d60000;
}
.editing textarea {
    position: absolute;
    z-index: 1;
    top: -2px;
    left: -2px;
    width: 274px;
    height: 84px;
    padding: 1px 0 0 3px;
    border: 2px solid #f9a3a8;
    outline: none;
    background: #f1f1f1;
    resize: none;
    overflow: hidden;
    white-space: pre;
}
.cursor {
    position: absolute;
    z-index: 2;
    top: 19px;
    left: 79px;
    width: 1px;
    height: 18px;
    background: #000;
}
td.new {
    line-height: 0;
    padding: 6px 0 0 5px;
}

/* record navigation */
.recordbar {
    display: flex;
    align-items: center;
    height: 17px;
    padding-left: 5px;
    border-top: 1px solid #a6acb4;
    background: linear-gradient(#f6f8fa, #e3e7ec);
}
.recordbar > label {
    width: 44px;
    font-size: 11px;
}
.recordbar > button {
    width: 16px;
}
.recordbar input {
    width: 51px;
    height: 16px;
    margin: 0 2px 0 1px;
    padding: 0 2px;
    border: 1px solid #b5b9bf;
    background: #fff;
    color: #000;
}
.recordbar > .nofilter {
    gap: 4px;
    width: 99px;
    height: 16px;
    margin: 0 4px 0 6px;
    border-left: 1px solid #a6acb4;
    border-right: 1px solid #a6acb4;
}
.recordbar .find {
    width: 70px;
    margin-right: 25px;
}
.scroll {
    display: flex;
    flex: 1;
    height: 16px;
    padding: 1px 2px;
    border-left: 1px solid #a6acb4;
    background: #cfcfcf;
}
.scroll button {
    width: 15px;
    height: 14px;
    border: 1px solid #ababab;
    background: #fff;
}
.track {
    flex: 1;
    padding: 0 28% 0 23%;
}
.thumb {
    height: 14px;
    border: 1px solid #ababab;
    background: #fff;
}

/* status bar */
.status {
    display: flex;
    align-items: center;
    height: 22px;
    padding-left: 8px;
    border-top: 1px solid #c8c6c4;
    background: #f3f2f1;
    font-size: 11px;
}
.numlock {
    margin: 0 18px 0 auto;
}
.status button {
    width: 38px;
    height: 21px;
}
.status .on {
    background: #c8c6c4;
}

/* taskbar */
.taskbar {
    display: flex;
    justify-content: space-between;
    height: 40px;
    background: linear-gradient(90deg, #24231f, #1e1b1d 25%, #232228 50%, #1e1b1d 75%, #1b1b1d);
    color: #fff;
}
.apps, .tray {
    display: flex;
    align-items: stretch;
}
.apps button {
    position: relative;
    width: 49px;
}
.open::after {
    content: "";
    position: absolute;
    inset: auto 4px 0 4px;
    height: 2px;
    background: #76b9ed;
}
.apps .active {
    background: #4c484b;
}
.active::after {
    left: 0;
    right: 0;
}
.ps text, .skype text {
    font: bold 11px "Open Sans", sans-serif;
}
.sc text {
    font: bold 7px "Open Sans", sans-serif;
}
.tray {
    align-items: center;
    padding-right: 4px;
}
.tray::after {
    content: "";
    height: 40px;
    border-right: 1px solid #777;
}
.battery {
    position: relative;
    width: 49px;
    margin-right: 2px;
    border: 2px solid #fff;
    background: #169c4b;
    font-size: 13px;
    line-height: 16px;
    text-align: center;
}
.battery::after {
    content: "";
    position: absolute;
    top: 3px;
    right: -4px;
    width: 2px;
    height: 10px;
    background: #fff;
}
.plug {
    display: flex;
    justify-content: center;
    width: 20px;
}
.tray button {
    width: 24px;
    height: 40px;
}
.lang {
    width: 34px;
    text-align: center;
}
.clock {
    width: 71px;
    line-height: 19px;
    text-align: center;
}
.tray .notes {
    position: relative;
    width: 45px;
    padding-right: 10px;
}
.badge {
    position: absolute;
    top: 18px;
    right: 11px;
    width: 17px;
    border: 1px solid #888;
    border-radius: 50%;
    background: #333;
    font-size: 11px;
    line-height: 15px;
    text-align: center;
}
```
